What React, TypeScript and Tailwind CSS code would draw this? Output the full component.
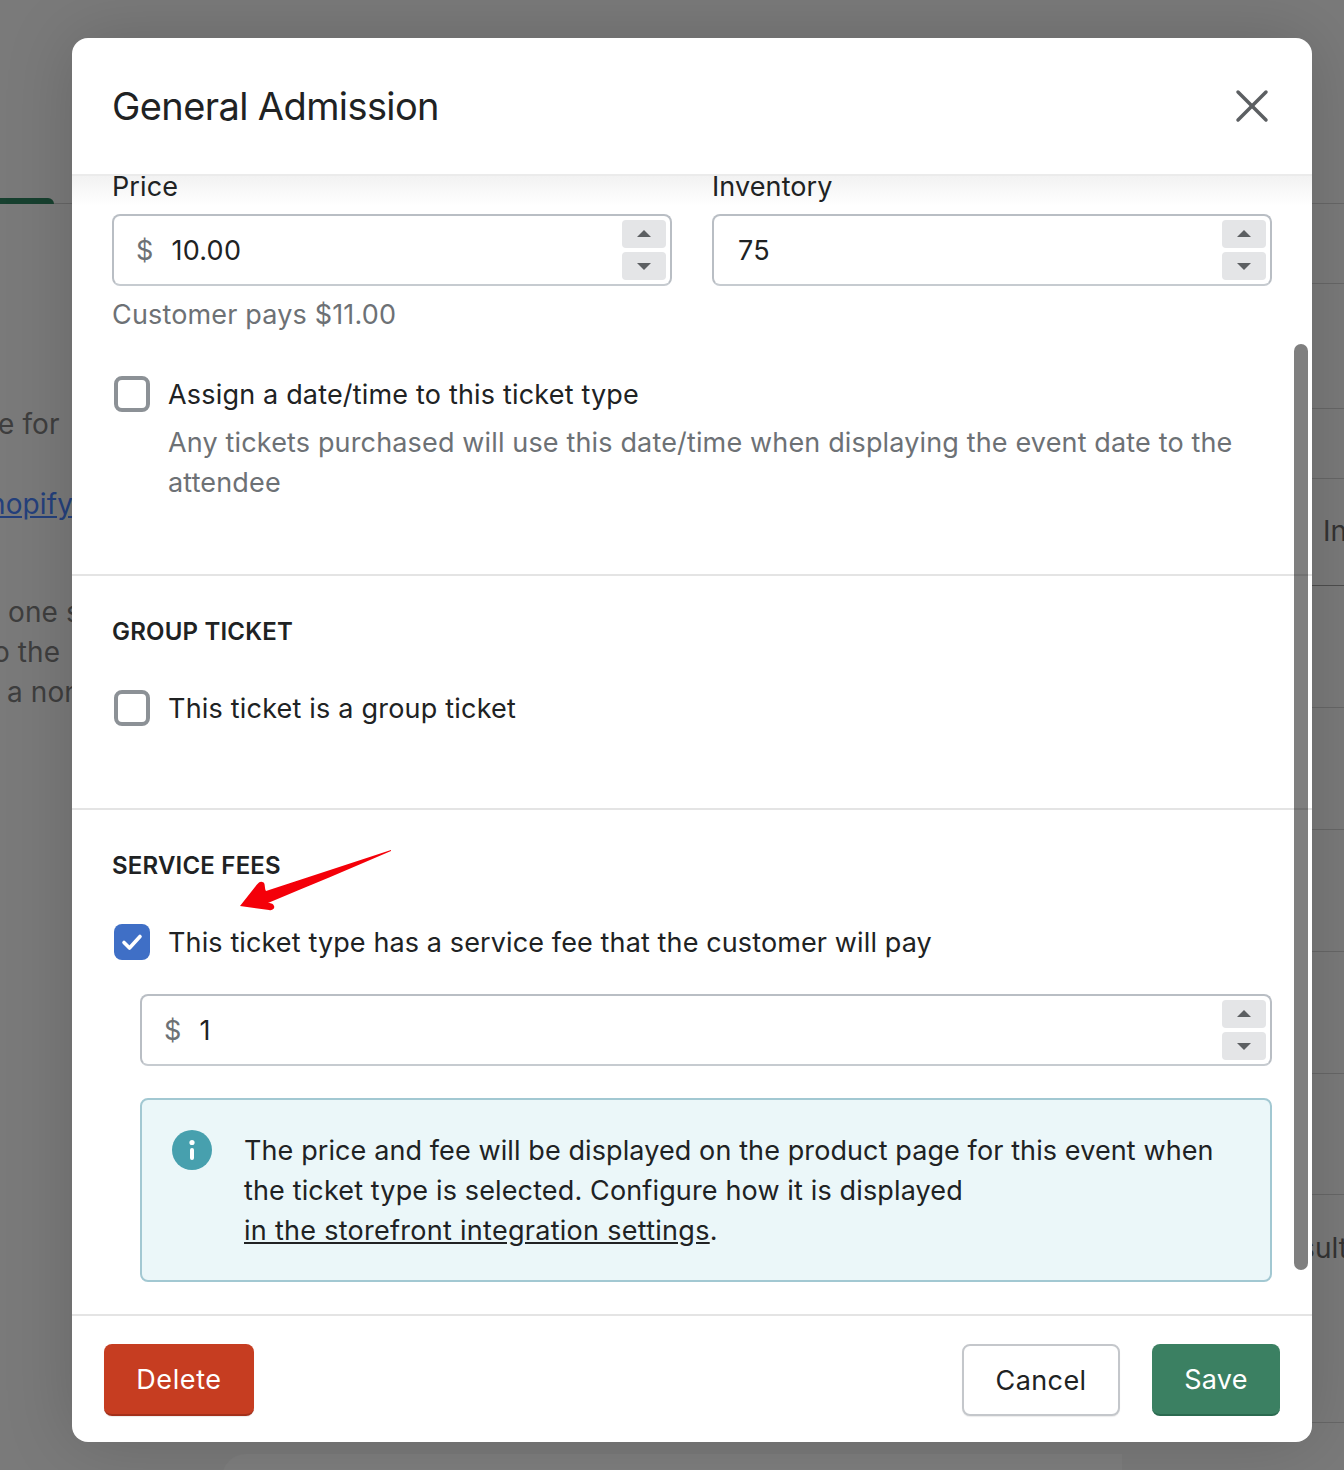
import { X } from "lucide-react";

const font = "font-['Inter','Noto_Sans',sans-serif]";

function Spinner() {
  return (
    <div className="flex flex-col gap-1 py-1 pr-1">
      <div className="flex h-[28px] w-[44px] items-center justify-center rounded bg-[#e4e5e7]">
        <div className="h-0 w-0 -translate-y-px border-x-[7px] border-b-[7px] border-x-transparent border-b-[#5c5f62]" />
      </div>
      <div className="flex h-[28px] w-[44px] items-center justify-center rounded bg-[#e4e5e7]">
        <div className="h-0 w-0 border-x-[7px] border-t-[7px] border-x-transparent border-t-[#5c5f62]" />
      </div>
    </div>
  );
}

function NumberField({ value, prefix }: { value: string; prefix?: boolean }) {
  return (
    <div className="flex h-[72px] items-center rounded-lg border-2 border-[#b9bec4] border-b-[#c6cbd0] bg-white">
      <div className={`flex flex-1 translate-y-px items-center ${prefix ? "pl-[22px]" : "pl-[24px]"}`}>
        {prefix && <span className="mr-[18px] text-[#6d7175]">$</span>}
        <span className="tracking-[0.25px] text-[#202223]">{value}</span>
      </div>
      <Spinner />
    </div>
  );
}

function CheckRow({ label, checked, labelClass }: { label: string; checked?: boolean; labelClass?: string }) {
  return (
    <div className="flex items-center">
      {checked ? (
        <div className="ml-[2px] flex h-[36px] w-[36px] items-center justify-center rounded-lg bg-[#3f6fc6]">
          <svg width="22" height="18" viewBox="0 0 22 18" fill="none">
            <path d="M3 9.5 L8.5 15 L19 3.5" stroke="white" strokeWidth="3.6" strokeLinecap="round" strokeLinejoin="round" />
          </svg>
        </div>
      ) : (
        <div className="ml-[2px] h-[36px] w-[36px] rounded-lg border-4 border-[#8c9196] bg-white" />
      )}
      <span className={`ml-[18px] translate-y-px text-[#202223] ${labelClass ?? ""}`}>{label}</span>
    </div>
  );
}

function SectionTitle({ children }: { children: string }) {
  return <div className="text-[24px] leading-[40px] font-semibold tracking-[0.2px] text-[#202223] uppercase">{children}</div>;
}

function BackdropLeft() {
  return (
    <div className="w-[72px] shrink-0 overflow-hidden text-[28px] leading-[40px] whitespace-nowrap text-[#3e3e3e]">
      <div className="flex h-[204px] items-end">
        <div className="h-[6px] w-[54px] rounded-tr-md bg-[#17402f]" />
        <div className="h-px flex-1 bg-[#666666]" />
      </div>
      <div className="mt-[200px] -ml-[2px]">e for</div>
      <div className="mt-[40px] -ml-[29px] text-[#24407c] underline">Shopify</div>
      <div className="mt-[68px] ml-[8px]">one s</div>
      <div className="-ml-[7px]">o the</div>
      <div className="ml-[7px]">a non</div>
    </div>
  );
}

function BackdropRight() {
  const rows = [
    { h: 204 },
    { h: 80 },
    { h: 125 },
    { h: 70 },
    { h: 107, text: "In", pad: 11, dark: true },
    { h: 122 },
    { h: 122 },
    { h: 122 },
    { h: 122 },
    { h: 121 },
    { h: 228, text: "sult", pad: -12, lead: 33 },
  ];
  return (
    <div className="ml-auto w-[32px] shrink-0 overflow-hidden text-[28px] leading-[40px] whitespace-nowrap text-[#333333]">
      {rows.map((r, i) => (
        <div key={i} className={`overflow-hidden border-b ${r.dark ? "border-[#4e4e4e]" : "border-[#676767]"}`} style={{ height: r.h }}>
          {r.text && (
            <div style={{ marginTop: r.lead ?? 32, marginLeft: r.pad }}>{r.text}</div>
          )}
        </div>
      ))}
    </div>
  );
}

function Modal() {
  return (
    <div className="absolute top-[38px] left-[72px] flex h-[1404px] w-[1240px] flex-col overflow-hidden rounded-2xl bg-white shadow-[0_0_70px_rgba(0,0,0,0.16)]">
      <div className="relative z-10 flex h-[138px] shrink-0 items-center justify-between border-b-2 border-[#ebebeb] pr-[32px] pl-[40px]">
        <h1 className="text-[38px] leading-[48px] font-normal tracking-[-0.6px] text-[#202223]">General Admission</h1>
        <X className="h-[56px] w-[56px] text-[#5c5f62]" strokeWidth={1.5} />
      </div>

      <div className="relative min-h-0 flex-1 overflow-hidden">
        {/* shadow under the fixed header */}
        <div className="absolute inset-x-0 top-0 h-[30px] bg-gradient-to-b from-[#f2f2f2] to-transparent" />

        <div className="relative -mt-[10px]">
          <div className="h-[410px] border-b-2 border-[#e4e4e4] px-[40px]">
            <div className="grid grid-cols-2 gap-[40px]">
              <div>
                <div className="mb-[8px] translate-y-px text-[#202223]">Price</div>
                <NumberField value="10.00" prefix />
                <div className="mt-[8px] mb-[1px] translate-y-px tracking-[0.16px] text-[#6d7175]">Customer pays $11.00</div>
              </div>
              <div>
                <div className="mb-[8px] translate-y-px text-[#202223]">Inventory</div>
                <NumberField value="75" />
              </div>
            </div>
            <div className="mt-[39px]">
              <CheckRow label="Assign a date/time to this ticket type" labelClass="tracking-[0.18px]" />
              <p className="mt-[8px] ml-[56px] translate-y-px tracking-[0.15px] text-[#6d7175]">
                Any tickets purchased will use this date/time when displaying the event date to the attendee
              </p>
            </div>
          </div>

          <div className="h-[234px] border-b-2 border-[#e4e4e4] px-[40px] pt-[36px]">
            <SectionTitle>Group Ticket</SectionTitle>
            <div className="mt-[36px]">
              <CheckRow label="This ticket is a group ticket" labelClass="tracking-[0.2px]" />
            </div>
          </div>

          <div className="px-[40px] pt-[36px]">
            <SectionTitle>Service Fees</SectionTitle>
            <div className="mt-[36px]">
              <CheckRow checked label="This ticket type has a service fee that the customer will pay" labelClass="tracking-[0.12px]" />
            </div>
            <div className="mt-[32px] ml-[28px]">
              <NumberField value="1" prefix />
            </div>
            <div className="mt-[32px] ml-[28px] flex h-[184px] rounded-lg border-2 border-[#a2c8d2] bg-[#ebf7f9] pt-[30px] pr-[40px] pl-[30px]">
              <svg className="mt-0 shrink-0" width="40" height="40" viewBox="0 0 40 40">
                <circle cx="20" cy="20" r="20" fill="#47a0ae" />
                <circle cx="20" cy="12.5" r="2.6" fill="white" />
                <rect x="18" y="18" width="4" height="12" rx="2" fill="white" />
              </svg>
              <p className="ml-[32px] translate-y-px text-[#202223]">
                The price and fee will be displayed on the product page for this event when <span className="tracking-[0.14px]">the ticket type is selected. Configure how it is displayed</span>
                <br />
                <span className="tracking-[0.28px] underline">in the storefront integration settings</span>.
              </p>
            </div>
          </div>
        </div>

        {/* scrollbar */}
        <div className="absolute top-[168px] right-[4px] h-[926px] w-[14px] rounded-full bg-black/50" />

        {/* hand-drawn annotation arrow */}
        <svg className="absolute top-[672px] left-[164px]" width="156" height="66" viewBox="0 0 156 66">
          <path
            d="M155 2 L30 43 C28 40 30 34 26 34 C23 33 21 37 19 39 L4 58 L33 62 C37 63 39 60 38 58 C37 55 34 55 32 55 C72 38 114 21 155 3 Z"
            fill="#f40009"
          />
        </svg>
      </div>

      <div className="flex h-[128px] shrink-0 items-start justify-between border-t-2 border-[#e4e4e4] px-[32px] pt-[28px]">
        <button className="flex h-[72px] w-[150px] items-center justify-center rounded-lg border-b-2 border-[#a3301a] bg-[#c63d21] pt-[2px] tracking-[0.6px] text-white shadow-[0_1px_1px_rgba(0,0,0,0.08)]">
          Delete
        </button>
        <div className="flex gap-[32px]">
          <button className="flex h-[72px] w-[158px] items-center justify-center rounded-lg border-2 border-[#c4c7cb] bg-white pt-[1px] tracking-[0.4px] text-[#202223] shadow-[0_1px_1px_rgba(0,0,0,0.08)]">
            Cancel
          </button>
          <button className="flex h-[72px] w-[128px] items-center justify-center rounded-lg border-b-2 border-[#2b6a50] bg-[#3b8062] pt-[2px] tracking-[0.25px] text-white">
            Save
          </button>
        </div>
      </div>
    </div>
  );
}

export default function App() {
  return (
    <div className={`relative flex h-[1470px] w-[1344px] overflow-hidden bg-[#7a7a7a] text-[27px] leading-[40px] tracking-[0.1px] ${font}`}>
      <BackdropLeft />
      <BackdropRight />
      {/* card peeking out under the dialog */}
      <div className="absolute top-[1454px] left-[222px] h-[40px] w-[900px] rounded-tl-3xl bg-white/[0.03]" />
      <Modal />
    </div>
  );
}
